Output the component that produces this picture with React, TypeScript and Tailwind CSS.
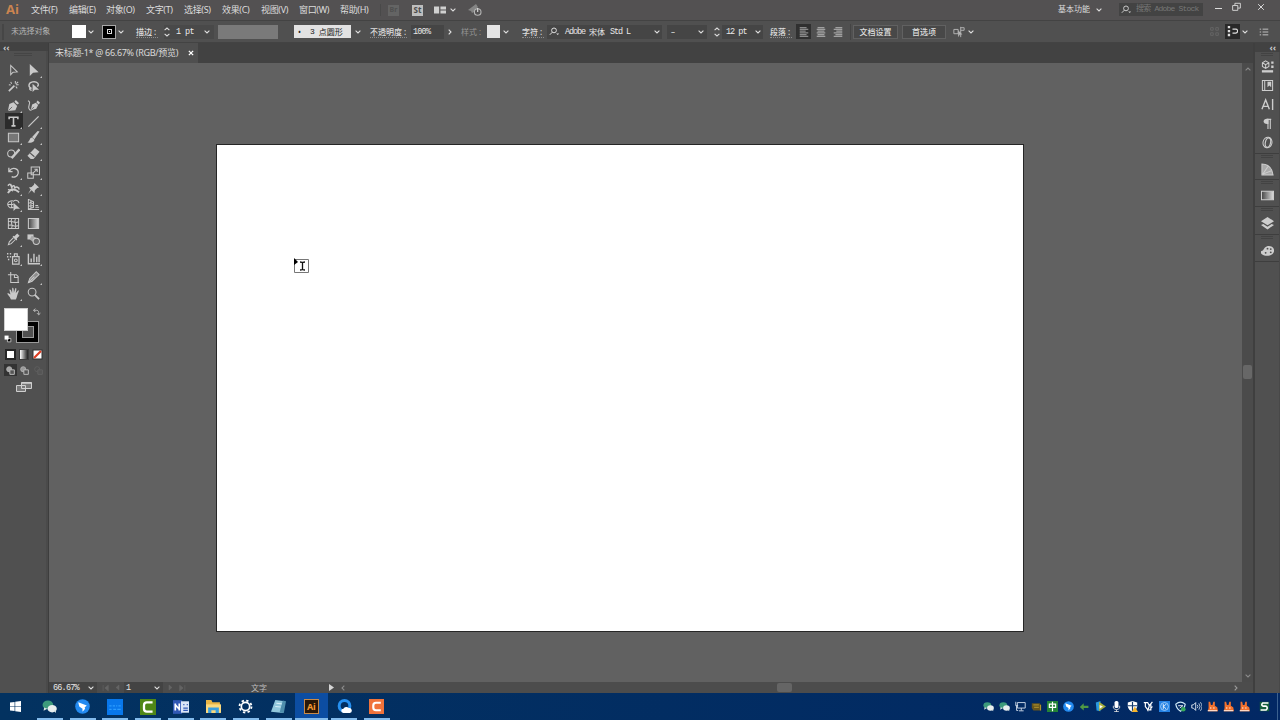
import type { ReactNode } from 'react';
import clsx from 'clsx';

type IconProps = { children: ReactNode; size?: number; className?: string };

// All line icons share one 14x14 grid
function Icon({ children, size = 14, className }: IconProps) {
    return (
        <svg
            width={size}
            height={size}
            viewBox="0 0 14 14"
            fill="none"
            stroke="currentColor"
            strokeWidth="1.1"
            className={clsx('shrink-0', className)}
        >
            {children}
        </svg>
    );
}

function Chevron({ className }: { className?: string }) {
    return (
        <svg width="6" height="4" viewBox="0 0 6 4" fill="none" stroke="currentColor" strokeWidth="1.1" className={clsx('shrink-0', className)}>
            <path d="M0.6 0.7 3 3 5.4 0.7" />
        </svg>
    );
}

function Stepper() {
    return (
        <svg width="6" height="10" viewBox="0 0 6 10" fill="none" stroke="currentColor" strokeWidth="1.1" className="shrink-0">
            <path d="M0.6 3.2 3 1 5.4 3.2M0.6 6.8 3 9 5.4 6.8" />
        </svg>
    );
}

function Search() {
    return (
        <svg width="11" height="9" viewBox="0 0 11 9" fill="none" stroke="currentColor" className="shrink-0">
            <circle cx="5" cy="3.4" r="2.4" />
            <path d="M3.3 5.2.8 7.8" />
            <path d="M7.2 6.5h3L8.7 8z" fill="currentColor" stroke="none" />
        </svg>
    );
}

const menus = [
    { label: '文件(F)', width: 'w-[38px]' },
    { label: '编辑(E)', width: 'w-[37px]' },
    { label: '对象(O)', width: 'w-[40px]' },
    { label: '文字(T)', width: 'w-[38px]' },
    { label: '选择(S)', width: 'w-[38px]' },
    { label: '效果(C)', width: 'w-[39px]' },
    { label: '视图(V)', width: 'w-[38px]' },
    { label: '窗口(W)', width: 'w-[41px]' },
    { label: '帮助(H)', width: 'w-[36px]' },
];

function MenuBar() {
    return (
        <div className="flex h-5 shrink-0 items-center bg-[#535152] text-[9px] text-[#dcdcdc]">
            <div className="-mt-[2px] w-[31px] shrink-0 pl-[6px] font-['Open_Sans'] text-[13px] leading-none font-bold text-[#cb8450]">Ai</div>
            {menus.map((menu) => (
                <div key={menu.label} className={clsx('shrink-0 whitespace-nowrap tracking-[-0.35px]', menu.width)}>
                    {menu.label}
                </div>
            ))}
            <div className="ml-[4px] h-3 w-px shrink-0 bg-[#494949]" />
            <div className="ml-[7px] flex h-[11px] w-[11px] shrink-0 items-center justify-center bg-[#646464] text-[7px] font-bold text-[#505050]">Br</div>
            <div className="ml-[13px] flex h-[11px] w-[11px] shrink-0 items-center justify-center bg-[#bdbdbd] text-[8px] font-bold text-[#4b4b4b]">St</div>
            <Icon size={12} className="ml-[11px] text-[#d0d0d0]">
                <path d="M0 3h6v8H0zM7.5 3H14v3.4H7.5zM7.5 7.6H14V11H7.5z" fill="currentColor" stroke="none" />
            </Icon>
            <Chevron className="ml-[4px]" />
            <Icon size={14} className="ml-[12px] text-[#b5b5b5]">
                <path d="M0 7 8 1l2 3-4 5-2 1-1-2z" fill="#858585" stroke="none" />
                <circle cx="9.7" cy="9" r="3.3" fill="#535152" />
                <path d="M9.7 5v4" stroke="#dedede" />
            </Icon>
            <div className="ml-auto w-[38px] -mt-[3px] text-[8px]">基本功能</div>
            <Chevron />
            <div className="ml-[17px] -mt-[2px] flex h-[13px] w-[84px] items-center gap-1 overflow-hidden bg-[#434343] pl-[2px] text-[#c9c9c9]">
                <Search />
                <span className="whitespace-nowrap font-['Liberation_Mono','Noto_Sans_CJK_SC',monospace] text-[8px] tracking-[-0.8px] text-[#777]">搜索 Adobe Stock</span>
            </div>
            <div className="ml-[12px] -mt-[3px] h-px w-[7px] bg-[#dcdcdc]" />
            <Icon size={9} className="ml-[10px] -mt-[7px]">
                <path d="M1 5.5h8V13H1zM4.500 5V2H13v7.500H9.500" strokeWidth="1.4" />
            </Icon>
            <Icon size={8} className="ml-[16px] mr-[15px] -mt-[7px]">
                <path d="m2 2 10 10M12 2 2 12" strokeWidth="1.7" />
            </Icon>
        </div>
    );
}

function Mono({ children, className }: { children: ReactNode; className?: string }) {
    return (
        <span className={clsx("whitespace-pre pt-[2px] font-['Liberation_Mono','Noto_Sans_CJK_SC',monospace] text-[8.5px] text-[#e8e8e8]", className)}>
            {children}
        </span>
    );
}

function Label({ children, className }: { children: ReactNode; className?: string }) {
    return <span className={clsx('shrink-0 border-b border-dotted border-[#8c8c8c] text-[8px] leading-[11px] font-medium whitespace-nowrap', className)}>{children}</span>;
}

function AlignIcon({ d, active }: { d: string; active?: boolean }) {
    return (
        <div className={clsx('flex h-[15px] w-[15px] items-center justify-center', active && 'bg-[#303030]')}>
            <Icon size={12} className={active ? 'text-[#8a8a8a]' : 'text-[#a0a0a0]'}>
                <path d={d} strokeWidth="1.5" />
            </Icon>
        </div>
    );
}

function OptionsBar() {
    return (
        <div className="flex h-[23px] shrink-0 items-center border-y border-[#434343] bg-[#505050] text-[8px] text-[#dedede]">
            <div className="ml-[2px] h-4 w-[2px] shrink-0 border-x border-[#464646]" />
            <span className="-mt-[2px] ml-[7px] w-[61px] shrink-0 tracking-[-0.2px] whitespace-nowrap text-[#b4b4b4]">未选择对象</span>
            <div className="h-[13px] w-[14px] shrink-0 bg-white" />
            <Chevron className="ml-[2px]" />
            <div className="ml-[8px] flex h-[14px] w-[14px] shrink-0 items-center justify-center border border-[#a8a8a8] bg-black">
                <div className="flex h-[5px] w-[5px] items-center justify-center border border-[#ddd]">
                    <div className="h-px w-px bg-white" />
                </div>
            </div>
            <Chevron className="ml-[2px]" />
            <Label className="ml-[12px] w-[22px]">描边 :</Label>
            <div className="ml-[6px] flex h-[14px] w-[50px] shrink-0 items-center bg-[#494949]">
                <Stepper />
                <Mono className="ml-[6px] w-[28px] tracking-[-0.6px]">1 pt</Mono>
                <Chevron />
            </div>
            <div className="ml-[4px] h-[14px] w-[60px] shrink-0 bg-[#7a7a7a]" />
            <div className="ml-[16px] flex h-[13px] w-[57px] shrink-0 items-center bg-[#e2e2e2] pl-[4px] text-[#222]">
                <span className="w-[12px]">•</span>
                <span className="font-['Liberation_Mono',monospace]">3</span>
                <span className="ml-[4px]">点圆形</span>
            </div>
            <Chevron className="ml-[4px]" />
            <Label className="ml-[9px] w-[37px]">不透明度 :</Label>
            <div className="ml-[4px] flex h-[14px] w-[33px] shrink-0 items-center bg-[#454545] pl-[2px]">
                <Mono className="tracking-[-0.8px]">100%</Mono>
            </div>
            <Chevron className="ml-[3px] -rotate-90" />
            <span className="ml-[8px] w-[26px] shrink-0 text-[#949494]">样式 :</span>
            <div className="h-[13px] w-[13px] shrink-0 bg-[#e4e4e4]" />
            <Chevron className="ml-[3px]" />
            <Label className="ml-[13px] w-[22px]">字符 :</Label>
            <div className="ml-[3px] flex h-[14px] w-[115px] shrink-0 items-center bg-[#454545] pl-[2px]">
                <Search />
                <Mono className="ml-[5px] w-[24px] shrink-0 tracking-[-1.1px]">Adobe</Mono>
                <span className="w-[21px] shrink-0 text-[#e8e8e8]">宋体</span>
                <Mono className="w-[44px] shrink-0 tracking-[-1.1px]">Std L</Mono>
                <Chevron />
            </div>
            <div className="ml-[5px] flex h-[14px] w-[40px] shrink-0 items-center bg-[#454545] pl-[4px]">
                <span className="w-[27px]">–</span>
                <Chevron />
            </div>
            <div className="ml-[7px] flex h-[14px] w-[49px] shrink-0 items-center">
                <Stepper />
                <div className="ml-[2px] flex h-full w-[41px] items-center bg-[#454545] pl-[4px]">
                    <Mono className="w-[29px] tracking-[-1px]">12 pt</Mono>
                    <Chevron />
                </div>
            </div>
            <Label className="ml-[7px] w-[22px]">段落 :</Label>
            <div className="ml-[4px] flex shrink-0 gap-[2px]">
                <AlignIcon active d="M2 2h8M2 4h10M2 6h7M2 8h10M2 10h8M2 12h10" />
                <AlignIcon d="M3 2h8M2 4h10M3 6h8M2 8h10M3 10h8M2 12h10" />
                <AlignIcon d="M4 2h8M2 4h10M5 6h7M2 8h10M4 10h8M2 12h10" />
            </div>
            <div className="ml-[5px] h-4 w-px shrink-0 bg-[#444]" />
            <div className="ml-[2px] flex h-[14px] w-[45px] shrink-0 items-center justify-center border border-[#616161] bg-[#484848] font-medium whitespace-nowrap">文档设置</div>
            <div className="ml-[4px] flex h-[14px] w-[44px] shrink-0 items-center justify-center border border-[#616161] bg-[#484848] font-medium whitespace-nowrap">首选项</div>
            <Icon size={12} className="ml-[7px] text-[#b5b5b5]">
                <path d="M1 4h5v5H1zM9 1v12M9 2h4v3H9" />
                <path d="m6 5 5 5H8l-2 3z" fill="currentColor" stroke="none" />
            </Icon>
            <Chevron className="ml-[3px]" />
            <Icon size={9} className="ml-auto text-[#6d6d6d]">
                <path d="M1 1h4v4H1zM9 1h4v4H9zM1 9h4v4H1zM9 9h4v4H9z" />
            </Icon>
            <div className="ml-[6px] flex h-[15px] w-[15px] shrink-0 items-center justify-center bg-[#292929]">
                <Icon size={11}>
                    <path d="M1 0h3v3H1zM1 5h3v3H1zM1 10h3v3H1z" fill="currentColor" stroke="none" />
                    <path d="M7 4h4a2 2 0 0 1 0 5H7" strokeWidth="1.5" />
                </Icon>
            </div>
            <Chevron className="ml-[2px]" />
            <Icon size={10} className="mr-[11px] ml-[11px]">
                <path d="M1 3h2M5 3h8M1 7h2M5 7h8M1 11h2M5 11h8" />
            </Icon>
        </div>
    );
}

type Tool = { name: string; art: ReactNode; flyout?: boolean };

const toolGroups: Tool[][] = [
    [
        { name: 'selection', art: <path d="M4 1.500v10l2.500-2.700L11 8.500z" /> },
        { name: 'direct', flyout: true, art: <path d="M3 0v13l3.500-3.500 6-.5z" fill="currentColor" stroke="none" /> },
        {
            name: 'wand',
            art: (
                <>
                    <path d="m2 12 6-6" strokeWidth="1.800" />
                    <path d="M9 1v3M12.500 5h-3M4 2l1 2M12 2l-2 2M11 9 9.500 7M2 5l2 .5" />
                </>
            ),
        },
        {
            name: 'lasso',
            art: (
                <>
                    <path d="M5 9C1 8 1 3 6 2s8 3 5 5M4 8c-2 1-1 3 1 3" strokeWidth="1.500" />
                    <path d="M6 4v9l2.500-2.500H13z" fill="currentColor" stroke="none" />
                </>
            ),
        },
    ],
    [
        {
            name: 'pen',
            flyout: true,
            art: (
                <>
                    <path d="m1 13 1.500-7.500 4.500-2 4 4-2 4.500z" fill="currentColor" stroke="none" />
                    <path d="m8 3 3 3 2-1.500L9.500 1z" fill="currentColor" stroke="none" />
                    <path d="m1.500 12.500 4-4" stroke="#4e4e4e" strokeWidth=".8" />
                </>
            ),
        },
        {
            name: 'curvature',
            art: (
                <>
                    <path d="m4 12 1.500-6 4-2L12 6.500l-2 4z" fill="currentColor" stroke="none" />
                    <path d="m10 3.500 2.500 2.500L14 4l-2.500-2.500z" fill="currentColor" stroke="none" />
                    <path d="M1 2c4 1 0 5 1 8s3 2 4 1" />
                    <path d="m4.500 11.500 3-3" stroke="#4e4e4e" strokeWidth=".8" />
                </>
            ),
        },
        { name: 'type', flyout: true, art: <path d="M2.300 4.500V2.500h9.400v2M7 2.500v9M4.800 11.700h4.400" strokeWidth="1.700" /> },
        { name: 'line', flyout: true, art: <path d="M1.500 12.500 12.500 1.500" strokeWidth="1.300" /> },
        { name: 'rectangle', flyout: true, art: <path d="M1.500 2.500h11v9h-11z" fill="#777" /> },
        {
            name: 'brush',
            flyout: true,
            art: <path d="M13.500.5 11.500 0 5.500 6.500 8 9zM5.500 7C2.500 7 3.500 11 .5 12c3.500 1.500 7.500 0 7.500-2.500z" fill="currentColor" stroke="none" />,
        },
        {
            name: 'shaper',
            flyout: true,
            art: (
                <>
                    <circle cx="4.500" cy="7" r="3.800" />
                    <path d="m5 12 8.500-9.500" strokeWidth="2.500" />
                </>
            ),
        },
        {
            name: 'eraser',
            flyout: true,
            art: (
                <>
                    <path d="m8.500 1 5 4-6.500 8H4L.5 9.500z" fill="currentColor" stroke="none" />
                    <path d="m3.500 6.500 4.500 4" stroke="#4e4e4e" />
                </>
            ),
        },
    ],
    [
        { name: 'rotate', flyout: true, art: <path d="M2 2v4h4M2.500 5.500C6 0 13 3 12 8c-.7 3-4 5-7 3.500" strokeWidth="1.400" /> },
        { name: 'scale', flyout: true, art: <path d="M4.500 1h9v8.500h-9zM.8 7.500h6v5.700h-6zM6 8l4.500-4M8 3.500h3v3" /> },
        {
            name: 'width',
            flyout: true,
            art: (
                <>
                    <path d="M1 4c2-3 4-1 4 2 2-4 4-1 3 1 2-3 5-1 5 1" strokeWidth="1.600" />
                    <path d="M1 12c3-5 7-5 12-1" strokeWidth="2" />
                    <path d="m4 2 2 8M1 8l4 1" />
                </>
            ),
        },
        { name: 'pin', flyout: true, art: <path d="m8 1 5 5-2 .5-2.500 2.500L8 12 5 9l-4 4 3-5-2-2 3-.5L7.500 3z" fill="currentColor" stroke="none" /> },
        {
            name: 'shape-builder',
            flyout: true,
            art: (
                <>
                    <path d="M7 10C3 12 0 8 1 5.500S6 2.500 7 3.500c2-2 5.500-1 6 2M1 7h6M5 4v6" />
                    <path d="M7 5v9l2.500-2.500H14z" fill="currentColor" stroke="none" />
                </>
            ),
        },
        { name: 'perspective', flyout: true, art: <path d="M1.500 1v11.500H13M1.500 1.500 7 4v6l-5.500 2M1.500 5 7 6M1.500 8.500 7 8M4.200 3v8M9 8h3M9 10h4" /> },
    ],
    [
        { name: 'mesh', art: <path d="M1.500 1.500h11v11h-11zM1.500 5c4-2 6 3 11 0M1.500 9c4-2 6 3 11 0M5 2c-2 4 2 6 0 10M9 2c-2 4 2 6 0 10" /> },
        { name: 'gradient', art: <path d="M1.500 1.500h11v11h-11z" fill="url(#toolGradient)" /> },
        {
            name: 'eyedropper',
            flyout: true,
            art: (
                <>
                    <path d="M7 5 2.500 9.500 1.500 12.500l3-1L9 7" />
                    <path d="m6 4 1-1 1 .5L11 .5 13.500 3 10.500 6l.5 1-1 1z" fill="currentColor" stroke="none" />
                </>
            ),
        },
        {
            name: 'blend',
            art: (
                <>
                    <path d="M.5 1.500H7V7H.5z" fill="currentColor" stroke="none" />
                    <path d="m5 3 5 2-3 5-4-3z" fill="#a8a8a8" stroke="none" />
                    <circle cx="10" cy="9" r="3.400" fill="#666" />
                </>
            ),
        },
    ],
    [
        {
            name: 'spray',
            flyout: true,
            art: (
                <>
                    <path d="M6 5h7v8H6zM8 5V2h3v3" strokeWidth="1.300" />
                    <circle cx="9.500" cy="9" r="1.500" />
                    <path d="M0 2h1.500M3 2h1.500M0 5h1.500M3 5h1.500M1 8h1.500" strokeWidth="1.600" />
                </>
            ),
        },
        { name: 'graph', flyout: true, art: <path d="M1.500 2v10.700H14M4.500 11V7M7.500 11V2M10.500 11V5M13 11V3" strokeWidth="1.500" /> },
    ],
    [
        { name: 'artboard', art: <path d="M4 1v11.500h9M1 4h9l2 2v6M8 4v3h4" /> },
        {
            name: 'slice',
            flyout: true,
            art: (
                <>
                    <path d="m10 .8 3 3L5.500 11l-4 1.500L3 8z" fill="#8d8d8d" />
                    <path d="M1.500 12.500 8 6" />
                </>
            ),
        },
        {
            name: 'hand',
            flyout: true,
            art: (
                <path
                    d="M4.200 13.500C3 10 .5 8 .3 7c.8-.8 2.200 0 3.400 1.200L2.600 3c1-.8 1.800 0 2.900 3.500L5.600 1c1-.7 1.800 0 1.800 5.300L9 1.300c1-.5 1.700.3.400 5.400l2.600-3.200c1 0 1 .8-.4 3.700C10.700 10 10.400 12 9.400 13.500z"
                    fill="currentColor"
                    stroke="none"
                />
            ),
        },
        {
            name: 'zoom',
            art: (
                <>
                    <circle cx="5.500" cy="5.500" r="4.200" />
                    <path d="m8.500 8.500 4.500 4.500" strokeWidth="2" />
                </>
            ),
        },
    ],
];

const drawModes = [
    { name: 'normal', tone: 'bg-[#333] text-[#bcbcbc]', fill: '#a5a5a5' },
    { name: 'behind', tone: 'text-[#bcbcbc]', fill: '#999' },
    { name: 'inside', tone: 'text-[#626262]', fill: 'none' },
];

function ToolPanel() {
    return (
        <div className="flex w-[49px] shrink-0 flex-col border-r border-[#3d3d3d] bg-[#424242] text-[#c9c9c9]">
            <div className="flex h-2 items-center pl-[3px] text-[9px] leading-none font-bold">‹‹</div>
            <div className="flex flex-1 flex-col border-r-2 border-[#4a4a4a] bg-[#505050]">
                <div className="mx-auto mt-[2px] mb-[6px] h-[3px] w-[18px] border-y border-[#454545]" />
                <div className="ml-[5px] flex flex-col gap-[3px]">
                    {toolGroups.map((group) => (
                        <div key={group[0].name} className="grid w-10 grid-cols-2">
                            {group.map((tool) => (
                                <div key={tool.name} className="flex h-4">
                                    <div
                                        className={clsx(
                                            'flex h-full w-[18px] shrink-0 items-center pl-[2px]',
                                            tool.name === 'type' && 'bg-[#2b2b2b]'
                                        )}
                                    >
                                        <Icon size={13}>{tool.art}</Icon>
                                        <svg width="2" height="2" viewBox="0 0 2 2" className="shrink-0 self-end">
                                            {tool.flyout && <path d="M2 0v2H0z" fill="#c4c4c4" />}
                                        </svg>
                                    </div>
                                </div>
                            ))}
                        </div>
                    ))}
                </div>

                {/* Fill and stroke */}
                <div className="relative mt-[7px] ml-1 h-[36px] w-9">
                    <div className="absolute top-[13px] left-[12px] flex h-[22px] w-[23px] items-center justify-center border border-[#9b9b9b] bg-black">
                        <div className="h-[12px] w-[12px] border border-[#9b9b9b] bg-[#505050]" />
                    </div>
                    <div className="absolute top-0 left-0 h-[23px] w-[24px] border border-[#cfcfcf] bg-white" />
                    <Icon size={8} className="absolute top-0 left-[29px]">
                        <path d="M4 1 1 4l3 3M1 4h5c4 0 4 3 4 7M7 9l3 3 3-3" strokeWidth="1.500" />
                    </Icon>
                    <Icon size={8} className="absolute top-[27px] left-0">
                        <path d="M6 6h6v6H6z" fill="#000" strokeWidth="1.500" />
                        <path d="M1 1h7v7H1z" fill="#fff" stroke="none" />
                    </Icon>
                </div>
                <div className="mt-[5px] ml-[5px] flex gap-[3px]">
                    <div className="h-[11px] w-[11px] border-2 border-[#252525] bg-white" />
                    <div className="h-[11px] w-[10px] border border-[#3b3b3b] bg-linear-to-r from-white to-[#222]" />
                    <svg width="11" height="11" viewBox="0 0 11 11">
                        <path d="M.5.5h10v10H.5z" fill="#333" />
                        <path d="M1.500 1.500h8v8h-8z" fill="#fff" />
                        <path d="m2 9 7-7" stroke="#dd3c20" strokeWidth="2.200" />
                    </svg>
                </div>
                <div className="mt-[4px] ml-1 flex gap-px">
                    {drawModes.map((mode) => (
                        <div key={mode.name} className={clsx('flex h-3 w-[13px] items-center justify-center', mode.tone)}>
                            <Icon size={9}>
                                <circle cx="5" cy="5" r="4" fill={mode.fill} />
                                <path d="M6 6h7v7H6z" fill="#555" strokeWidth="1.500" />
                            </Icon>
                        </div>
                    ))}
                </div>
                <svg width="16" height="12" viewBox="0 0 16 12" fill="#777" stroke="#cfcfcf" className="mt-[5px] ml-4">
                    <path d="M.5 4.500h9v6h-9zM5.500 1.500h10v6h-10z" />
                    <path d="M5.500 2h10" strokeWidth="1.500" />
                </svg>
            </div>
        </div>
    );
}

function Workspace() {
    return (
        <div className="flex min-w-0 flex-1 flex-col">
            {/* Document tabs */}
            <div className="flex h-5 shrink-0 items-center bg-[#424242]">
                <div className="flex h-full w-[149px] items-center bg-[#4f4f4f] pl-[6px] text-[9px] text-[#dadada]">
                    <span className="w-[133px] tracking-[-0.3px] whitespace-nowrap">未标题-1* @ 66.67% (RGB/预览)</span>
                    <Icon size={6} className="text-white">
                        <path d="m2 2 10 10M12 2 2 12" strokeWidth="3" />
                    </Icon>
                </div>
            </div>

            <div className="flex min-h-0 flex-1">
                <div className="flex-1 bg-[#616161]">
                    <div className="relative mt-[81px] ml-[167px] h-[488px] w-[808px] border border-[#262626] bg-white">
                        <svg width="16" height="16" viewBox="0 0 16 16" fill="none" className="absolute top-[113px] left-[76px]">
                            <path d="M1.500 1.500h14v13h-14z" stroke="#777" />
                            <path d="M1 0v7l4-3z" fill="#000" />
                            <path d="M7 4c1.500 0 2.500 0 2.500 1 0-1 1-1 2.500-1M9.500 4.500v7M7 12c1.500 0 2.500 0 2.500-1 0 1 1 1 2.500 1" stroke="#111" strokeWidth="1.300" />
                        </svg>
                    </div>
                </div>
                <div className="flex w-[11px] shrink-0 flex-col items-center bg-[#4b4b4b] py-[4px] text-[#8b8b8b]">
                    <Chevron className="rotate-180" />
                    <div className="mt-[294px] h-[14px] w-[9px] rounded-[2px] bg-[#676767]" />
                    <Chevron className="mt-auto" />
                </div>
            </div>

            {/* Status bar */}
            <div className="flex h-[11px] shrink-0 items-center bg-[#4c4c4c] text-[8px] leading-none text-[#dedede]">
                <div className="flex h-full w-[48px] items-center bg-[#434343] pl-1">
                    <Mono className="w-[35px] tracking-[-0.8px]">66.67%</Mono>
                    <Chevron />
                </div>
                <Icon size={8} className="ml-[5px] text-[#646464]">
                    <path d="M2 2v10M11 2 5 7l6 5z" fill="currentColor" />
                </Icon>
                <Icon size={7} className="ml-[4px] text-[#646464]">
                    <path d="m10 2-6 5 6 5z" fill="currentColor" />
                </Icon>
                <div className="ml-[3px] flex h-full w-[39px] items-center bg-[#434343] pl-[2px]">
                    <Mono className="w-[28px]">1</Mono>
                    <Chevron />
                </div>
                <Icon size={7} className="ml-[4px] text-[#646464]">
                    <path d="m4 2 6 5-6 5z" fill="currentColor" />
                </Icon>
                <Icon size={8} className="ml-[4px] text-[#646464]">
                    <path d="M12 2v10M3 2l6 5-6 5z" fill="currentColor" />
                </Icon>
                <span className="mt-px ml-[65px] w-[78px] text-[#bdbdbd]">文字</span>
                <svg width="5" height="7" viewBox="0 0 5 7" fill="#d5d5d5" className="shrink-0">
                    <path d="M0 0v7l5-3.500z" />
                </svg>
                <Chevron className="ml-[6px] rotate-90 text-[#8a8a8a]" />
                <div className="ml-[431px] h-[9px] w-[15px] rounded-[2px] bg-[#656565]" />
                <Chevron className="mr-[14px] ml-auto -rotate-90 text-[#9a9a9a]" />
            </div>
        </div>
    );
}

const panelGroups: { height: string; icons: ReactNode[] }[] = [
    {
        height: 'h-[102px]',
        icons: [
            <>
                <path d="m5 1 3.500 2v4L5 9 1.500 7V3zM1.500 3 5 5l3.500-2M5 5v4M1 12h12" />
                <path d="M11 1.500h2.500V4H11zM11 6h2.500v2.500H11zM1 11h12v2.500H1z" fill="currentColor" stroke="none" />
            </>,
            <>
                <path d="M1.500 1.500h11v11h-11zM4 2v10" />
                <path d="M7 3h4v6L9 7 7 9z" fill="currentColor" stroke="none" />
            </>,
            <path d="M1 12 5 2l4 10M2.500 9h5M12.500 1v12" strokeWidth="1.500" />,
            <>
                <path d="M6 2.500h5M7.500 2v11M10 2v11" strokeWidth="1.200" />
                <path d="M8 2C1 1 1 8.500 8 7.500z" fill="currentColor" stroke="none" />
            </>,
            <>
                <ellipse cx="7" cy="7" rx="4.800" ry="5.800" transform="rotate(12 7 7)" />
                <ellipse cx="7.500" cy="7" rx="2.800" ry="5.200" transform="rotate(12 7 7)" strokeWidth="1.300" />
            </>,
        ],
    },
    { height: 'h-[26px]', icons: [<path d="M1 1c7 0 11 5 12 12H1zM2 12 8 3M2 12l10-4" fill="#aaa" />] },
    { height: 'h-[27px]', icons: [<path d="M.5 2.500h13v9H.5z" fill="url(#toolGradient)" />] },
    {
        height: 'h-[28px]',
        icons: [
            <>
                <path d="M7 0 14 4.500 7 9 0 4.500z" fill="currentColor" stroke="none" />
                <path d="m0 8.500 2.500-1L7 10.500l4.500-3 2.500 1L7 13.500z" fill="currentColor" stroke="none" />
            </>,
        ],
    },
    {
        height: 'h-[27px]',
        icons: [
            <>
                <path d="M4 4c4-4 11-1 10 4s-9 6-13 3 1-4 1-4z" fill="currentColor" stroke="none" />
                <circle cx="7" cy="5" r="1" fill="#4e4e4e" stroke="none" />
                <circle cx="10.500" cy="5.500" r="1" fill="#4e4e4e" stroke="none" />
                <circle cx="10.500" cy="9" r="1" fill="#4e4e4e" stroke="none" />
                <circle cx="5" cy="9.500" r="1" fill="#4e4e4e" stroke="none" />
            </>,
        ],
    },
];

function PanelDock() {
    return (
        <div className="flex w-[27px] shrink-0 flex-col border-l-2 border-[#3f3f3f] bg-[#424242] text-[#cdcdcd]">
            <div className="flex h-[9px] items-center justify-end pr-1 text-[9px] leading-none font-bold">‹‹</div>
            <div className="flex flex-1 flex-col border-r border-[#484848] bg-[#505050]">
                {panelGroups.map((group, i) => (
                    <div key={i} className={clsx('flex shrink-0 flex-col items-center border-b border-[#3e3e3e]', group.height)}>
                        <div className="mt-px h-[3px] w-3 shrink-0 border-y border-[#434343]" />
                        <div className={clsx('flex flex-1 flex-col items-center', i === 0 ? 'gap-[6px] pt-[4px]' : 'justify-center pt-px')}>
                            {group.icons.map((art, j) => (
                                <Icon key={j} size={13}>
                                    {art}
                                </Icon>
                            ))}
                        </div>
                    </div>
                ))}
            </div>
        </div>
    );
}

function WeChat() {
    return (
        <g stroke="none">
            <ellipse cx="5.500" cy="5.500" rx="5" ry="4" fill="#3d9a7b" />
            <ellipse cx="9.500" cy="9" rx="4.300" ry="3.500" fill="#e8eeee" />
            <path d="m2 8-.5 3L5 9zM11 11l2 2v-3z" fill="#d8e4e2" />
        </g>
    );
}

function Bird() {
    return (
        <g stroke="none">
            <circle cx="7" cy="7" r="6.800" fill="#238af0" />
            <path d="m3 3 8 3-2 2 .5 1L7 12V9L4 7z" fill="#fff" />
        </g>
    );
}

const apps: { name: string; art: ReactNode }[] = [
    { name: 'wechat', art: <WeChat /> },
    { name: 'dingtalk', art: <Bird /> },
    {
        name: 'stream',
        art: (
            <>
                <path d="M0 0h14v14H0z" fill="#0877eb" stroke="none" />
                <path d="M2 6h2M5 6h2M8 6h1M10 6h2M2 9h2M5.500 9H8M9 9h3" stroke="#2c9dff" />
            </>
        ),
    },
    {
        name: 'camtasia',
        art: (
            <>
                <path d="M0 0h14v14H0z" fill="#4e8717" stroke="none" />
                <path d="M11 3H6Q3.500 3 3.500 5.500v3Q3.500 11 6 11h5" stroke="#fff" strokeWidth="2" />
            </>
        ),
    },
    {
        name: 'recorder',
        art: (
            <>
                <path d="M0 1h8v12H0z" fill="#3158b4" stroke="none" />
                <path d="M7 2h7v10H7z" fill="#dce6f8" stroke="none" />
                <path d="M2 10V4M5.500 10V4M2 5l3.500 4" stroke="#fff" strokeWidth="1.500" />
                <path d="M9 5h1M12 5h1M9 8h4M9 10h4" stroke="#3158b4" />
            </>
        ),
    },
    {
        name: 'explorer',
        art: (
            <g stroke="none">
                <path d="M0 1h5l1 2h7v10H0z" fill="#e9b546" />
                <path d="M0 5h14v8H0z" fill="#fbd97d" />
                <path d="M2 13V8h10v5H9v-2.500H5V13z" fill="#3a9fe0" />
            </g>
        ),
    },
    {
        name: 'settings',
        art: (
            <>
                <circle cx="7" cy="7" r="3.900" stroke="#fff" strokeWidth="1.600" />
                <circle cx="7" cy="7" r="5.600" stroke="#fff" strokeWidth="1.700" strokeDasharray="2.200 2.200" />
            </>
        ),
    },
    {
        name: 'notepad',
        art: (
            <>
                <path d="m4 1 9 1-2 11L0 12z" fill="#91c7dc" stroke="none" />
                <path d="m11 1.500 3 .5-2 11-4-.3z" fill="#4f8ead" stroke="none" />
                <path d="m5 4 5 .5M4 7l5 .5" stroke="#d7eef7" />
            </>
        ),
    },
    { name: 'illustrator', art: null },
    {
        name: 'browser',
        art: (
            <>
                <circle cx="7" cy="6.500" r="5" stroke="#2690f0" strokeWidth="2.800" />
                <path d="M6 13a2 2 0 0 1 0-4 3 3 0 0 1 5-.5 2.300 2.300 0 0 1 1 4.500z" fill="#fff" stroke="none" />
            </>
        ),
    },
    {
        name: 'camtasia-rec',
        art: (
            <>
                <path d="M0 0h14v14H0z" fill="#f0733b" stroke="none" />
                <path d="M11 3.500H6.500Q4 3.500 4 6v2q0 2.500 2.500 2.500H11" stroke="#fff" strokeWidth="2" />
            </>
        ),
    },
];

const fire = (
    <g stroke="none">
        <path d="M2 1h2l1 4h2l1-4h2v5l3 2 1 5H1l1-4z" fill="#f2712e" />
        <path d="M4 8h1.500v2H4zM8 8h1.500v2H8zM1 11.500h12V13H1z" fill="#ffd9c4" />
    </g>
);

const tray: ReactNode[] = [
    <WeChat />,
    <WeChat />,
    <path d="M3 2h10v7H3zM8 9v3M5 12.500h6M1 1v5h3M2 6v6h2" stroke="#dce7f2" />,
    <>
        <path d="M1 3h10l2 2v7H3L1 9z" fill="#66551d" stroke="none" />
        <path d="M3 5h7M4 8h6M12 5v7" stroke="#c3a233" />
    </>,
    <>
        <path d="M0 0h14v14H0z" fill="#238237" stroke="none" />
        <path d="M3 4h8v4H3zM7 1v12" stroke="#fff" strokeWidth="1.500" />
    </>,
    <Bird />,
    <path d="M6 3v3h6v3H6v3L1 7.500z" fill="#4f9944" stroke="none" />,
    <>
        <path d="M1 2 7 0v13L2 12z" fill="#2999df" stroke="none" />
        <path d="m5 1 9 6-9 6z" fill="#a6ae3d" stroke="none" />
        <path d="m6 5 4 2-4 3z" fill="#fff" stroke="none" />
    </>,
    <>
        <rect x="4.500" y="0" width="5" height="9" rx="2" fill="#fff" stroke="none" />
        <path d="M3 6v3q4 4 8 0V6M7 11v3M4 13.500h6" stroke="#dedede" />
    </>,
    <>
        <path d="M7 0 13 2v5q-1 5-6 7-5-2-6-7V2z" fill="#fff" stroke="none" />
        <path d="M7 1v12M1 6h12" stroke="#123a6c" strokeWidth="1.500" />
        <path d="m10 7 4 7H6z" fill="#f6b52d" stroke="none" />
    </>,
    <path d="M1 2h5l2 4 4-5M3 2v5l3 4M8 6l-2 7M10 4v8M12 7l-4 5" stroke="#fff" strokeWidth="1.500" />,
    <>
        <path d="M0 0h14v14H0z" fill="#2482e4" stroke="none" />
        <circle cx="7" cy="7" r="5" stroke="#a9d3fb" />
        <path d="M5.500 4v6M9 4 6 7l3 3" stroke="#fff" />
    </>,
    <>
        <path d="M1 4q6-5 12 0-1 6-6 9Q2 10 1 4z" stroke="#cfe9f7" strokeWidth="1.500" />
        <path d="M4 6h6L6 9" stroke="#fff" />
        <circle cx="10.500" cy="10.500" r="3" fill="#35a85a" stroke="none" />
    </>,
    <>
        <path d="M1 5h2l3-3v10L3 9H1z" stroke="#eef3f8" />
        <path d="M8 5q1.500 2 0 4M10 3q3 4 0 8M12 1.500q4 5.500 0 11" stroke="#cbd6e4" />
    </>,
    fire,
    fire,
    fire,
];

function Taskbar() {
    return (
        <div className="flex h-[27px] shrink-0 bg-linear-to-r from-[#033260] to-[#022864]">
            <div className="flex w-[33.5px] shrink-0 items-center justify-center pr-[2px]">
                <svg width="11" height="11" viewBox="0 0 12 12" fill="#fff">
                    <path d="M0 1.700 5 1v4.600H0zM5.700.9 12 0v5.600H5.700zM0 6.300h5V11l-5-.7zM5.700 6.300H12V12l-6.300-.9z" />
                </svg>
            </div>
            {apps.map((app) => (
                <div
                    key={app.name}
                    className={clsx(
                        'flex w-[32.7px] shrink-0 flex-col items-center',
                        app.name === 'illustrator' && 'bg-[#0c4da2]'
                    )}
                >
                    <div className="flex h-[25px] items-center pt-[2px]">
                        {app.name === 'illustrator' ? (
                            <div className="flex h-[15px] w-[15px] items-center justify-center border border-[#c98a48] bg-[#2a1808] text-[9px] leading-none font-bold text-[#f79a32]">
                                Ai
                            </div>
                        ) : (
                            <Icon size={app.name === 'camtasia' || app.name === 'stream' || app.name === 'recorder' ? 16 : 15}>{app.art}</Icon>
                        )}
                    </div>
                    <div className={clsx('h-[2px] bg-[#83bbec]', app.name === 'illustrator' ? 'w-full' : 'w-[26px]')} />
                </div>
            ))}
            <div className="mr-[2px] ml-auto flex items-center border-r border-[#3b618f]">
                {tray.map((art, i) => (
                    <div key={i} className="flex w-4 justify-center">
                        <Icon size={11}>{art}</Icon>
                    </div>
                ))}
                <div className="mr-[7px] ml-[6px] flex w-3 justify-center">
                    <Icon size={11}>
                        <path d="M1 1h12v12H1z" fill="#17603f" stroke="none" />
                        <path d="M12 2.500H5Q2 5 5 6.500h4q3 2 0 5H2" stroke="#fff" strokeWidth="2" />
                    </Icon>
                </div>
            </div>
        </div>
    );
}

export default function App() {
    return (
        <div className="flex h-[720px] w-[1280px] flex-col overflow-hidden bg-[#424242] font-['Noto_Sans','Noto_Sans_CJK_SC',sans-serif]">
            <svg width="0" height="0" className="absolute">
                <defs>
                    <linearGradient id="toolGradient">
                        <stop offset="0" stopColor="#444" />
                        <stop offset="1" stopColor="#ddd" />
                    </linearGradient>
                </defs>
            </svg>
            <MenuBar />
            <OptionsBar />
            <div className="flex min-h-0 flex-1">
                <ToolPanel />
                <Workspace />
                <PanelDock />
            </div>
            <Taskbar />
        </div>
    );
}
